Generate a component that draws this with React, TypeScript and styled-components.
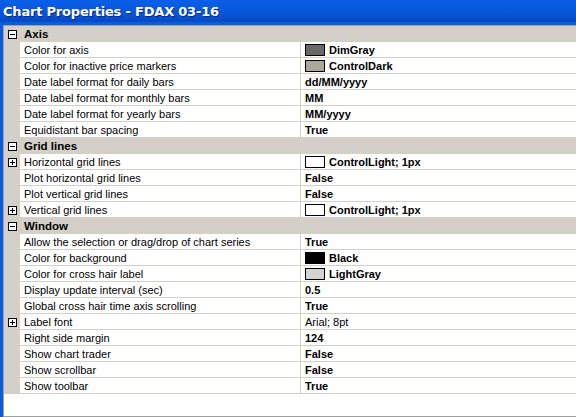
import React from "react";
import styled, { createGlobalStyle } from "styled-components";

const G = createGlobalStyle`
  body { margin: 0; background: #fff; font-family: "Liberation Sans", Arial, sans-serif; }
`;
const Win = styled.div`
  width: 576px; height: 417px; display: flex; flex-direction: column; overflow: hidden;
  background: #0a5ce0;
`;
const Title = styled.div`
  height: 22px; flex: none; display: flex; align-items: center; padding-left: 3px;
  background: linear-gradient(#0a5fe8, #0856d8 60%, #0648c0);
  color: #fff; font: bold 13px "DejaVu Sans", sans-serif; letter-spacing: -0.2px;
  text-shadow: 1px 1px 0 #0a2a80;
`;
const Body = styled.div`
  flex: 1; margin-left: 3px; margin-top: 3px; background: #fff; display: flex; flex-direction: column;
  border-top: 1px solid #a0a0a0; border-left: 1px solid #a0a0a0; border-bottom: 1px solid #a0a0a0;
`;
const Row = styled.div<{ cat?: boolean }>`
  display: grid; grid-template-columns: 16px 280px 1fr; height: 16px;
  background: ${(p) => (p.cat ? "#d4d0c8" : "#fff")};
  font-size: 11px; color: #000;
`;
const Margin = styled.div`
  background: #d4d0c8; display: flex; align-items: center; justify-content: center;
`;
const Cell = styled.div<{ bold?: boolean; val?: boolean }>`
  display: flex; align-items: center; gap: 4px; padding-left: 4px;
  border-bottom: 1px solid #d4d0c8;
  ${(p) => (p.val ? "border-left: 1px solid #d4d0c8;" : "")}
  font-weight: ${(p) => (p.bold ? "bold" : "normal")};
  white-space: nowrap; overflow: hidden;
`;
const CatCell = styled.div`
  grid-column: 2 / 4; display: flex; align-items: center; padding-left: 4px; font-weight: bold;
  font-size: 11.5px;
`;
const Box = styled.div`
  width: 7px; height: 7px; border: 1px solid #000; background: #fff; position: relative;
  display: flex; align-items: center; justify-content: center;
  font: 9px/1 "Liberation Sans", sans-serif;
`;
const Swatch = styled.span<{ c: string }>`
  width: 18px; height: 10px; border: 1px solid #000; background: ${(p) => p.c}; flex: none;
`;
const Toggle = ({ plus }: { plus?: boolean }) => (
  <Box>
    <svg width="7" height="7" viewBox="0 0 7 7">
      <path d="M1 3.5h5" stroke="#000" />
      {plus && <path d="M3.5 1v5" stroke="#000" />}
    </svg>
  </Box>
);

type R = [string, string, string?, boolean?];
const data: { cat: string; rows: R[] }[] = [
  { cat: "Axis", rows: [
    ["Color for axis", "DimGray", "#696969"],
    ["Color for inactive price markers", "ControlDark", "#aca899"],
    ["Date label format for daily bars", "dd/MM/yyyy"],
    ["Date label format for monthly bars", "MM"],
    ["Date label format for yearly bars", "MM/yyyy"],
    ["Equidistant bar spacing", "True"],
  ]},
  { cat: "Grid lines", rows: [
    ["Horizontal grid lines", "ControlLight; 1px", "#fff", true],
    ["Plot horizontal grid lines", "False"],
    ["Plot vertical grid lines", "False"],
    ["Vertical grid lines", "ControlLight; 1px", "#fff", true],
  ]},
  { cat: "Window", rows: [
    ["Allow the selection or drag/drop of chart series", "True"],
    ["Color for background", "Black", "#000"],
    ["Color for cross hair label", "LightGray", "#d3d3d3"],
    ["Display update interval (sec)", "0.5"],
    ["Global cross hair time axis scrolling", "True"],
    ["Label font", "Arial; 8pt", undefined, true],
    ["Right side margin", "124"],
    ["Show chart trader", "False"],
    ["Show scrollbar", "False"],
    ["Show toolbar", "True"],
  ]},
];

export default function App() {
  return (
    <Win>
      <G />
      <Title>Chart Properties - FDAX 03-16</Title>
      <Body>
        {data.map((g) => (
          <React.Fragment key={g.cat}>
            <Row cat>
              <Margin><Toggle /></Margin>
              <CatCell>{g.cat}</CatCell>
            </Row>
            {g.rows.map(([n, v, c, exp]) => (
              <Row key={n}>
                <Margin>{exp && <Toggle plus />}</Margin>
                <Cell>{n}</Cell>
                <Cell val bold={n !== "Label font"}>
                  {c && <Swatch c={c} />}
                  {c && " "}{v}
                </Cell>
              </Row>
            ))}
          </React.Fragment>
        ))}
      </Body>
    </Win>
  );
}
